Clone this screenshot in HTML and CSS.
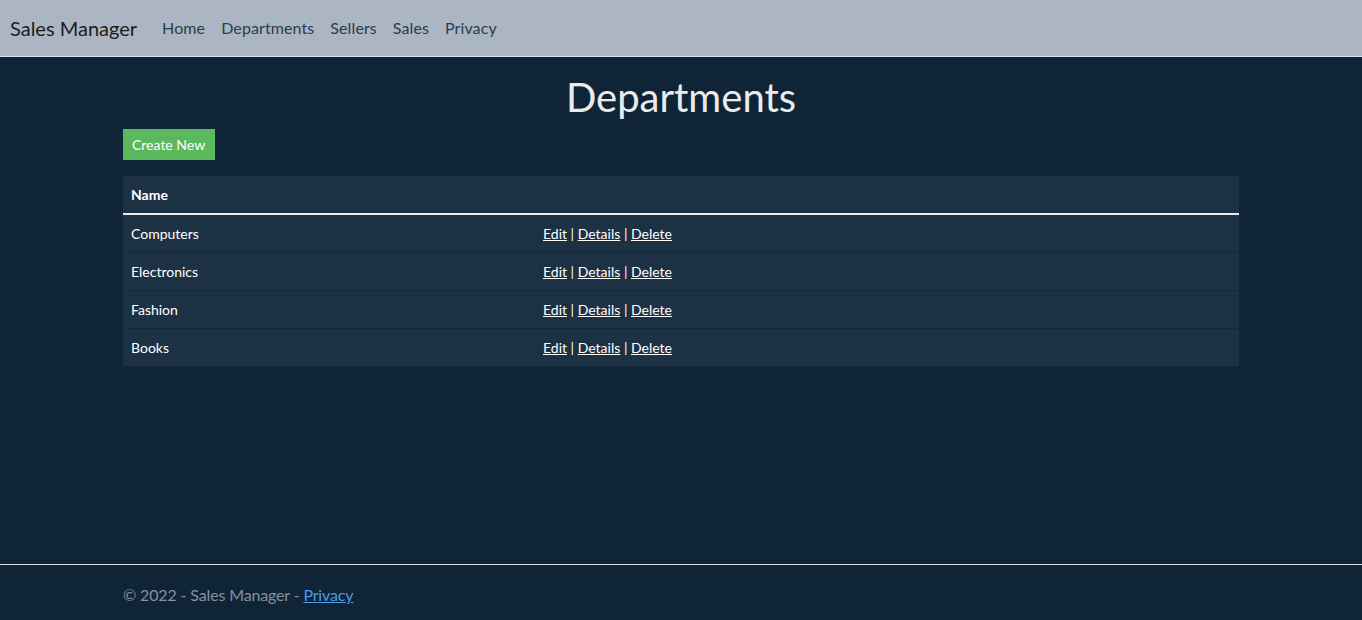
FILE: index.html
```html
<!DOCTYPE html>
<html lang="en">
<head>
<meta charset="utf-8">
<title>Departments - Sales Manager</title>
<link rel="stylesheet" href="styles.css">
</head>
<body>
<header class="navbar">
  <a class="brand" href="#">Sales Manager</a>
  <nav class="nav">
    <a class="nav-link" href="#">Home</a>
    <a class="nav-link" href="#">Departments</a>
    <a class="nav-link" href="#">Sellers</a>
    <a class="nav-link" href="#">Sales</a>
    <a class="nav-link" href="#">Privacy</a>
  </nav>
</header>
<main class="main">
  <div class="container">
    <h1 class="title">Departments</h1>
    <p class="actions"><a class="btn" href="#">Create New</a></p>
    <table class="table">
      <thead>
        <tr><th class="col-name">Name</th><th></th></tr>
      </thead>
      <tbody>
        <tr><td>Computers</td><td><a href="#">Edit</a> | <a href="#">Details</a> | <a href="#">Delete</a></td></tr>
        <tr><td>Electronics</td><td><a href="#">Edit</a> | <a href="#">Details</a> | <a href="#">Delete</a></td></tr>
        <tr><td>Fashion</td><td><a href="#">Edit</a> | <a href="#">Details</a> | <a href="#">Delete</a></td></tr>
        <tr><td>Books</td><td><a href="#">Edit</a> | <a href="#">Details</a> | <a href="#">Delete</a></td></tr>
      </tbody>
    </table>
  </div>
</main>
<footer class="footer">
  <div class="container">© 2022 - Sales Manager - <a class="footer-link" href="#">Privacy</a></div>
</footer>
</body>
</html>
```
FILE: styles.css
```css
* { box-sizing: border-box; }
html, body { margin: 0; padding: 0; }
body {
  background: #0f2537;
  color: #ebebeb;
  font-family: Lato, "Open Sans", sans-serif;
  font-size: 16px;
  line-height: 1.5;
  display: flex;
  flex-direction: column;
  min-height: 625px;
}
.navbar {
  height: 57px;
  background: #abb6c2;
  border-bottom: 1px solid #dfe3e8;
  display: flex;
  align-items: center;
  padding: 0 12px 0 10px;
}
.brand {
  font-size: 20px;
  color: #1a1d21;
  text-decoration: none;
  margin-right: 17px;
  line-height: 30px;
}
.nav { display: flex; }
.nav-link {
  color: #2a3c4f;
  text-decoration: none;
  padding: 8px 8px;
  font-size: 16px;
  letter-spacing: 0.1px;
}
.main { flex: 1; }
.container {
  width: 1140px;
  margin: 0 auto;
  padding: 0 12px;
}
.title {
  margin: 16px 0 8px;
  text-align: center;
  font-size: 40px;
  font-weight: 400;
  line-height: 1.2;
  color: #ebebeb;
}
.actions { margin: 0 0 16px; }
.btn {
  display: inline-block;
  background: #5cb85c;
  color: #fff;
  text-decoration: none;
  font-size: 14px;
  line-height: 21px;
  padding: 5px 10px 5px 9px;
}
.table {
  width: 100%;
  border-collapse: collapse;
  font-size: 14px;
  color: #fff;
}
.table th, .table td {
  background: #1d3144;
  padding: 8px;
  text-align: left;
  line-height: 21px;
  border-bottom: 1px solid #15293b;
}
.table thead th {
  font-weight: 700;
  border-bottom: 2px solid #ebebeb;
  padding-bottom: 8px;
}
.col-name { width: 412px; }
.table td a { color: #fff; text-decoration: underline; }
.footer {
  border-top: 1px solid #dee2e6;
  line-height: 60px;
  height: 61px;
  color: #8591a0;
  font-size: 16px;
  white-space: nowrap;
  letter-spacing: -0.15px;
}
.footer-link { color: #4c9be8; }
```
